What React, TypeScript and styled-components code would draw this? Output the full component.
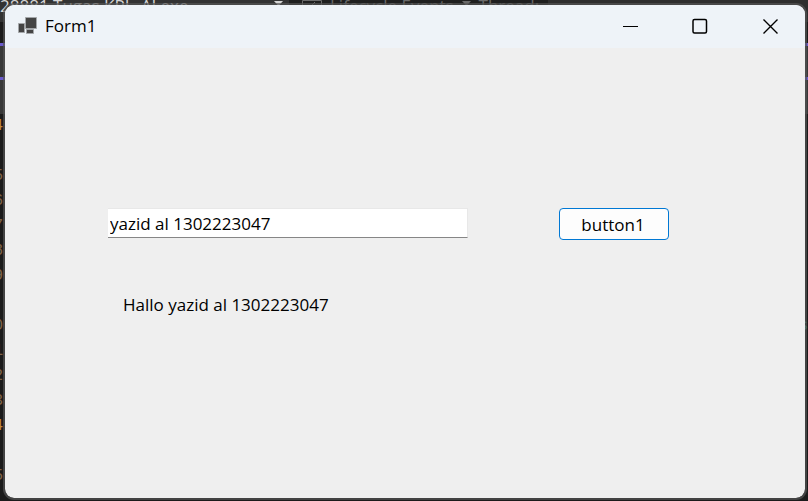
import React, { useState } from "react";
import styled, { createGlobalStyle } from "styled-components";

const GlobalStyle = createGlobalStyle`
  *, *::before, *::after { box-sizing: border-box; }
  body {
    margin: 0;
    background: #1b1b1b;
    font-family: "Open Sans", "Noto Sans", sans-serif;
    font-size: 17px;
    color: #000;
  }
`;

const Desktop = styled.div`
  position: relative;
  display: flex;
  min-height: 100vh;
  padding: 3px 1px 1px 3px;
  overflow: hidden;
`;

const Editor = styled.div`
  position: absolute;
  inset: 0;
  display: flex;
  flex-direction: column;
  overflow: hidden;
  background: #1b1b1b;
`;

const EditorToolbar = styled.div`
  display: flex;
  flex: none;
  height: 22px;
  background: #2e2e2e;
  white-space: nowrap;
`;

const ToolbarGroup = styled.div<{ $width: number; $dim?: boolean }>`
  display: flex;
  flex: none;
  gap: 8px;
  width: ${(p) => p.$width}px;
  padding-right: 6px;
  background: ${(p) => (p.$dim ? "#1f1f1f" : "#333333")};
  color: ${(p) => (p.$dim ? "#6a6a6a" : "#d6d6d6")};
`;

const ToolbarText = styled.span<{ $grow?: boolean }>`
  flex: ${(p) => (p.$grow ? 1 : "none")};
  line-height: 12px;
`;

const Caret = styled.svg`
  flex: none;
  width: 9px;
  height: 6px;
  margin-top: 1px;
  fill: currentColor;
`;

const EventIcon = styled.svg`
  flex: none;
  width: 20px;
  height: 16px;
  margin-left: 13px;
  fill: none;
  stroke: currentColor;
`;

const Band = styled.div<{ $height: number; $color: string }>`
  flex: none;
  height: ${(p) => p.$height}px;
  background: ${(p) => p.$color};
`;

const CodeArea = styled.div`
  display: flex;
  justify-content: space-between;
`;

const Gutter = styled.div`
  display: flex;
  flex-direction: column;
  width: 3px;
`;

const LineNumber = styled.span<{ $color?: string }>`
  display: flex;
  justify-content: flex-end;
  height: 25px;
  line-height: 25px;
  font-family: "Liberation Mono", monospace;
  font-size: 16px;
  color: ${(p) => p.$color ?? "#806348"};
`;

const Window = styled.main`
  position: relative;
  display: flex;
  flex: 1;
  flex-direction: column;
  overflow: hidden;
  border: 2px solid rgba(84, 84, 84, 0.7);
  border-radius: 11px;
  background: #efefef;
  background-clip: padding-box;
`;

const TitleBar = styled.header`
  display: flex;
  align-items: center;
  height: 43px;
  padding: 0 0 2px 13px;
  background: #eef3f8;
`;

const AppIcon = styled.svg`
  width: 20px;
  height: 19px;
  margin-right: 7px;
`;

const Title = styled.h1`
  flex: 1;
  margin: 0;
  font-size: 17px;
  font-weight: 400;
  line-height: 24px;
`;

const CaptionButton = styled.button`
  display: flex;
  align-items: center;
  justify-content: center;
  width: 70px;
  height: 41px;
  padding: 0;
  border: 0;
  background: transparent;
  svg {
    width: 16px;
    height: 16px;
    fill: none;
    stroke: #000;
  }
`;

const Form = styled.form`
  display: grid;
  grid-template-columns: 360fr 91fr 110fr;
  row-gap: 50px;
  align-items: start;
  padding: 160px 136px 0 103px;
`;

const TextBox = styled.input`
  width: 100%;
  height: 30px;
  padding: 0 2px;
  border: 1px solid #e8e8e8;
  border-left-width: 0;
  border-bottom-color: #868686;
  border-radius: 0;
  outline: none;
  background: #fff;
  color: #000;
  font: inherit;
`;

const SubmitButton = styled.button`
  grid-column: 3;
  height: 32px;
  padding: 0 2px 0 0;
  border: 1px solid #0078d4;
  border-radius: 4px;
  background: #fdfdfd;
  color: #000;
  font: inherit;
`;

const Greeting = styled.output`
  grid-column: 1 / -1;
  padding-left: 15px;
  line-height: 30px;
`;

const lineDigits = ["4", "", "5", "6", "7", "8", "9", "", "0", "1", "2", "3", "4", "", "5"];

function DownCaret() {
  return (
    <Caret viewBox="0 0 9 6" aria-hidden="true">
      <path d="M0 0h9L4.5 5z" />
    </Caret>
  );
}

function EditorBackdrop() {
  return (
    <Editor aria-hidden="true">
      <EditorToolbar>
        <ToolbarGroup $width={289}>
          <ToolbarText $grow>28881 Tugas KPL_Al.exe</ToolbarText>
          <DownCaret />
        </ToolbarGroup>
        <ToolbarGroup $width={259} $dim>
          <EventIcon viewBox="0 0 20 16">
            <path d="M.5.5h19v15H.5zM13 2l-6 6h5l-5 6" />
          </EventIcon>
          <ToolbarText>Lifecycle Events</ToolbarText>
          <DownCaret />
          <ToolbarText>Thread:</ToolbarText>
        </ToolbarGroup>
      </EditorToolbar>
      <Band $height={21} $color="#1b1b1b" />
      <Band $height={3} $color="#6a5acd" />
      <Band $height={31} $color="#383838" />
      <Band $height={3} $color="#6a5acd" />
      <Band $height={34} $color="#383838" />
      <CodeArea>
        <Gutter>
          {lineDigits.map((digit, i) => (
            <LineNumber key={i} $color={i === 0 || i === 12 ? "#c08a3a" : undefined}>
              {digit}
            </LineNumber>
          ))}
        </Gutter>
        <Gutter>
          {lineDigits.map((_, i) => (
            <LineNumber key={i} $color="#3f9c86">
              {i === 8 ? "s" : ""}
            </LineNumber>
          ))}
        </Gutter>
      </CodeArea>
    </Editor>
  );
}

export default function App() {
  const [name, setName] = useState("yazid al 1302223047");
  const [greeting, setGreeting] = useState("Hallo yazid al 1302223047");

  const greet = (event: React.FormEvent) => {
    event.preventDefault();
    setGreeting(`Hallo ${name}`);
  };

  return (
    <>
      <GlobalStyle />
      <Desktop>
        <EditorBackdrop />
        <Window>
          <TitleBar>
            <AppIcon viewBox="0 0 20 19" aria-hidden="true">
              <path
                d="M7.5 1.500h11v11h-11zM.5 7.500h6v9h-6zM8.500 13.500h7v4h-7z"
                fill="#444"
                stroke="#a3a6a9"
                strokeWidth="1"
              />
            </AppIcon>
            <Title>Form1</Title>
            <CaptionButton type="button" aria-label="Minimize">
              <svg viewBox="0 0 16 16">
                <path d="M1 8.5h15" />
              </svg>
            </CaptionButton>
            <CaptionButton type="button" aria-label="Maximize">
              <svg viewBox="0 0 16 16">
                <rect x="1" y="1.5" width="13.5" height="13.5" rx="1.5" strokeWidth="1.5" />
              </svg>
            </CaptionButton>
            <CaptionButton type="button" aria-label="Close">
              <svg viewBox="0 0 16 16">
                <path d="M1.500 1.500l14 14M15.500 1.500l-14 14" strokeWidth="1.400" />
              </svg>
            </CaptionButton>
          </TitleBar>
          <Form onSubmit={greet}>
            <TextBox
              id="name"
              aria-label="Name"
              value={name}
              onChange={(event) => setName(event.target.value)}
            />
            <SubmitButton type="submit">button1</SubmitButton>
            <Greeting htmlFor="name">{greeting}</Greeting>
          </Form>
        </Window>
      </Desktop>
    </>
  );
}
